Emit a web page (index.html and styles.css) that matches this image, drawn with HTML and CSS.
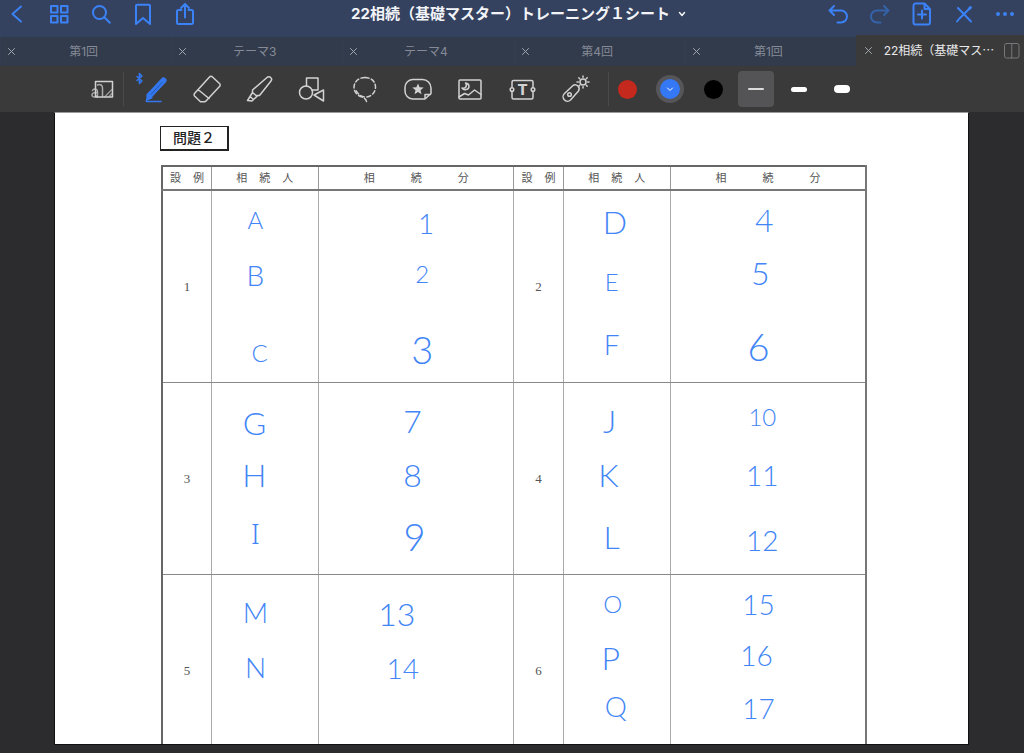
FILE: index.html
```html
<!DOCTYPE html>
<html lang="ja">
<head>
<meta charset="utf-8">
<meta name="viewport" content="width=device-width, initial-scale=1">
<title>22相続（基礎マスター）トレーニング１シート</title>
<link rel="stylesheet" href="styles.css">
</head>
<body>
<div class="app">
  <header class="topbar">
    <nav class="topbar-group">
      <button class="nav-btn nav-btn-back" aria-label="戻る"><svg width="24" height="24" viewBox="0 0 24 24"><path d="M16 4.500 7.500 12l8.500 7.500"/></svg></button>
      <button class="nav-btn" aria-label="サムネイル"><svg width="24" height="24" viewBox="0 0 24 24"><rect x="4" y="4" width="6.500" height="6.500"/><rect x="14" y="4" width="6.500" height="6.500"/><rect x="4" y="14" width="6.500" height="6.500"/><rect x="14" y="14" width="6.500" height="6.500"/></svg></button>
      <button class="nav-btn" aria-label="検索"><svg width="24" height="24" viewBox="0 0 24 24"><circle cx="10.500" cy="10.500" r="6.500"/><path d="m15.300 15.300 5.500 5.500"/></svg></button>
      <button class="nav-btn" aria-label="ブックマーク"><svg width="24" height="24" viewBox="0 0 24 24"><path d="M6 2.800h12a1 1 0 0 1 1 1V22l-7-6-7 6V3.800a1 1 0 0 1 1-1z"/></svg></button>
      <button class="nav-btn" aria-label="共有"><svg width="24" height="24" viewBox="0 0 24 24"><path d="M8.500 8H5.500A1.500 1.500 0 0 0 4 9.500v11A1.500 1.500 0 0 0 5.500 22h13a1.500 1.500 0 0 0 1.500-1.500v-11A1.500 1.500 0 0 0 18.500 8h-3M12 15.500V2.500M8 6l4-4 4 4"/></svg></button>
    </nav>
    <button class="doc-title"><span>22相続（基礎マスター）トレーニング１シート</span><svg width="8" height="8" viewBox="0 0 8 8"><path d="m1.500 2.500 2.500 3 2.500-3"/></svg></button>
    <nav class="topbar-group">
      <button class="nav-btn" aria-label="元に戻す"><svg width="24" height="24" viewBox="0 0 24 24"><path d="M8 4 3.500 8.500 8 13M3.500 8.500H15a5.500 5.500 0 0 1 0 12h-3.500"/></svg></button>
      <button class="nav-btn nav-btn-dim" aria-label="やり直す"><svg width="24" height="24" viewBox="0 0 24 24"><path d="M16 4l4.500 4.500L16 13M20.500 8.500H9a5.500 5.500 0 0 0 0 12h3.500"/></svg></button>
      <button class="nav-btn" aria-label="ページを追加"><svg width="24" height="24" viewBox="0 0 24 24"><path d="M5.500 1.500h9L20 7v13.500a2 2 0 0 1-2 2H5.500a2 2 0 0 1-2-2v-17a2 2 0 0 1 2-2zM14.500 1.500V7H20M12 8.500v8M8 12.500h8"/></svg></button>
      <button class="nav-btn" aria-label="編集を終了"><svg width="24" height="24" viewBox="0 0 24 24"><path d="m6 6 13 13.500M5 19.500l2-2.500L17 7"/><path d="m17.500 6.500 1-1" stroke-width="3"/></svg></button>
      <button class="nav-btn nav-btn-more" aria-label="その他"><svg width="24" height="24" viewBox="0 0 24 24"><circle class="fill" cx="5" cy="12" r="2"/><circle class="fill" cx="12" cy="12" r="2"/><circle class="fill" cx="19" cy="12" r="2"/></svg></button>
    </nav>
  </header>

  <nav class="tabs">
    <div class="tab"><button class="tab-close" aria-label="閉じる"><svg width="9" height="9" viewBox="0 0 9 9"><path d="m1.500 1.500 6 6m0-6-6 6"/></svg></button><button class="tab-label">第1回</button></div>
    <div class="tab"><button class="tab-close" aria-label="閉じる"><svg width="9" height="9" viewBox="0 0 9 9"><path d="m1.500 1.500 6 6m0-6-6 6"/></svg></button><button class="tab-label">テーマ3</button></div>
    <div class="tab"><button class="tab-close" aria-label="閉じる"><svg width="9" height="9" viewBox="0 0 9 9"><path d="m1.500 1.500 6 6m0-6-6 6"/></svg></button><button class="tab-label">テーマ4</button></div>
    <div class="tab"><button class="tab-close" aria-label="閉じる"><svg width="9" height="9" viewBox="0 0 9 9"><path d="m1.500 1.500 6 6m0-6-6 6"/></svg></button><button class="tab-label">第4回</button></div>
    <div class="tab"><button class="tab-close" aria-label="閉じる"><svg width="9" height="9" viewBox="0 0 9 9"><path d="m1.500 1.500 6 6m0-6-6 6"/></svg></button><button class="tab-label">第1回</button></div>
    <div class="tab tab-active"><button class="tab-close" aria-label="閉じる"><svg width="9" height="9" viewBox="0 0 9 9"><path d="m1.500 1.500 6 6m0-6-6 6"/></svg></button><button class="tab-label">22相続（基礎マス⋯</button><button class="tab-split" aria-label="分割表示"><svg width="18" height="18" viewBox="0 0 18 18"><rect x="1.500" y="1.500" width="14.500" height="14.500" rx="2"/><path d="M8.750 1.500V16"/></svg></button></div>
  </nav>

  <div class="toolbar">
    <button class="tool tool-zoom" aria-label="拡大ウインドウ"><svg width="32" height="32" viewBox="0 0 32 32"><rect x="9.500" y="8.500" width="17" height="15.500"/><path d="M6.500 17.500c1-2 5-2 5 1V24M11.500 19.500c-3-.2-5.500.3-5.500 2.500 0 2.700 4.500 2.500 5.500 0M11.500 12c3-1 5 0 5 3v8.500" opacity=".75"/><path d="M26 16.500 19 23.500M26 20.500 23 23.500" opacity=".6"/></svg></button>
    <span class="divider"></span>
    <div class="tools">
      <button class="tool tool-pen" aria-label="ペン"><svg width="38" height="36" viewBox="0 0 38 36"><path class="bt" d="m2 5.500 5 4.500-2.600 2.500v-10L7 5 2 9.500"/><path class="body" d="M14.500 24.500 28.500 9.500"/><path class="fill" d="M10.500 30.500 12.500 22l5.500 5z"/><path d="M11.500 30.500H26"/><path class="shine" d="m16 23.500 11-12"/></svg></button>
      <button class="tool" aria-label="消しゴム"><svg width="32" height="32" viewBox="0 0 32 32"><path d="M3.500 20.500 18.500 4a2 2 0 0 1 3 0l7 6.500a2 2 0 0 1 0 3L15 28a2 2 0 0 1-1.500.700H9.500L3.500 23a2 2 0 0 1 0-2.500zM7 16.500l11 9"/></svg></button>
      <button class="tool" aria-label="蛍光ペン"><svg width="32" height="32" viewBox="0 0 32 32"><path d="M8.500 17 23 4.500a2.500 2.500 0 0 1 3.700 0 2.600 2.600 0 0 1 .3 3.500L15.500 22.500h-3.500l-3.500-3zM8.500 19.500 6 23.500l3.500 3 4.500-4M6 23.500 3.500 27.500l4.500.500 1.500-1.500"/></svg></button>
      <button class="tool" aria-label="図形"><svg width="32" height="32" viewBox="0 0 32 32"><path d="M10.500 13V5H22v12h-6"/><circle cx="10" cy="19.500" r="6.500"/><path d="m18 22 9.500-5v11z"/></svg></button>
      <button class="tool" aria-label="なげなわ"><svg width="32" height="32" viewBox="0 0 32 32"><path stroke-dasharray="4 2.500" d="M16 4.500c6 0 10.500 4 10.500 9.500S22 24 17 24c-5 0-8-3-10-6.500"/><path stroke-dasharray="4 2.500" d="M16 4.500C9.500 4.500 5 9 5 14.500c0 4 2.500 7 6.500 9 3 1 5.500 2 6 5"/></svg></button>
      <button class="tool" aria-label="ステッカー"><svg width="32" height="32" viewBox="0 0 32 32"><path d="M10.500 6.500h10a8.500 8.500 0 0 1 8.500 8.500v5.500l-6 5.500H10.500A8 8 0 0 1 3 18v-3.500a8 8 0 0 1 7.500-8zM23 26v-4.500h5.500"/><path class="fill" d="m16 10.500 1.600 3.800 4.100.3-3.200 2.700 1 4L16 19.100l-3.500 2.200 1-4-3.200-2.700 4.100-.3z"/></svg></button>
      <button class="tool" aria-label="画像"><svg width="32" height="32" viewBox="0 0 32 32"><rect x="5" y="7" width="22" height="19" rx="1"/><path d="M11.500 10c2.500 3-.5 6-3.500 5 2 3 7 1.500 7-1.500 0-2-1.500-3.200-3.500-3.500zM5 24l5.500-3.500 4 1.500 6-5 6.500 4.500"/></svg></button>
      <button class="tool" aria-label="テキスト"><svg width="32" height="32" viewBox="0 0 32 32"><path d="M5 14V9a1.500 1.500 0 0 1 1.500-1.500h18A1.500 1.500 0 0 1 26 9v5M5 19v5.500A1.500 1.500 0 0 0 6.500 26h18a1.500 1.500 0 0 0 1.500-1.500V19"/><circle cx="5" cy="16.500" r="1.800"/><circle cx="26" cy="16.500" r="1.800"/><text class="tool-letter" x="15.500" y="22" text-anchor="middle">T</text></svg></button>
      <button class="tool" aria-label="レーザーポインタ"><svg width="32" height="32" viewBox="0 0 32 32"><path d="m4.500 20.500 8.500-8a4 4 0 0 1 5.500 5.500L10.500 27a4.200 4.200 0 0 1-6-6.500z"/><circle cx="9.500" cy="21.500" r="1.800"/><circle cx="23" cy="9" r="3"/><path d="M23 4.300V3M23 13.700V15M18.300 9H17M27.700 9H29M19.700 5.700l-.9-.9M26.300 5.700l.9-.9M26.300 12.300l.9.900M19.700 12.300l-.9.900"/></svg></button>
    </div>
    <span class="divider divider-end"></span>
    <div class="presets">
      <button class="preset" aria-label="赤"><span class="swatch swatch-red"></span></button>
      <button class="preset" aria-label="青"><span class="swatch swatch-blue"><svg width="8" height="8" viewBox="0 0 8 8"><path d="m1.500 3 2.500 2.500L6.500 3"/></svg></span></button>
      <button class="preset" aria-label="黒"><span class="swatch swatch-black"></span></button>
      <button class="preset preset-on" aria-label="細い線"><span class="stroke stroke-thin"></span></button>
      <button class="preset" aria-label="中くらいの線"><span class="stroke stroke-mid"></span></button>
      <button class="preset" aria-label="太い線"><span class="stroke stroke-thick"></span></button>
    </div>
  </div>

  <main class="workspace">
    <article class="sheet">
      <h1 class="question">問題２</h1>
      <table class="answers">
        <colgroup><col class="c-no"><col class="c-heir"><col class="c-share"><col class="c-no"><col class="c-heir"><col class="c-share"></colgroup>
        <thead>
          <tr>
            <th><div class="spread"><span>設</span><span>例</span></div></th>
            <th><div class="spread"><span>相</span><span>続</span><span>人</span></div></th>
            <th><div class="spread spread-wide"><span>相</span><span>続</span><span>分</span></div></th>
            <th><div class="spread"><span>設</span><span>例</span></div></th>
            <th><div class="spread"><span>相</span><span>続</span><span>人</span></div></th>
            <th><div class="spread spread-wide"><span>相</span><span>続</span><span>分</span></div></th>
          </tr>
        </thead>
        <tbody>
          <tr>
            <td>1</td>
            <td><svg class="ink"><text class="s" x="41%" y="38">A</text><text class="m" x="41%" y="95">B</text><text class="s" x="45%" y="171">C</text></svg></td>
            <td><svg class="ink"><text class="m" x="55%" y="43">1</text><text class="s" x="53%" y="92">2</text><text class="xl" x="53%" y="173">3</text></svg></td>
            <td>2</td>
            <td><svg class="ink"><text class="l" x="48%" y="43">D</text><text class="s" x="45%" y="100">E</text><text class="m" x="45%" y="164">F</text></svg></td>
            <td><svg class="ink"><text class="l" x="48%" y="41">4</text><text class="l" x="46%" y="94">5</text><text class="xl" x="45%" y="170">6</text></svg></td>
          </tr>
          <tr>
            <td>3</td>
            <td><svg class="ink"><text class="l" x="40%" y="52">G</text><text class="l" x="40%" y="104">H</text><text class="m slab" x="41%" y="161">I</text></svg></td>
            <td><svg class="ink"><text class="l" x="48%" y="50">7</text><text class="l" x="48%" y="104">8</text><text class="xl" x="49%" y="168">9</text></svg></td>
            <td>4</td>
            <td><svg class="ink"><text class="l" x="43%" y="50">J</text><text class="l" x="42%" y="104">K</text><text class="l" x="45%" y="166">L</text></svg></td>
            <td><svg class="ink"><text class="s" x="47%" y="43">10</text><text class="m" x="47%" y="103">11</text><text class="m" x="47%" y="168">12</text></svg></td>
          </tr>
          <tr>
            <td>5</td>
            <td><svg class="ink"><text class="m" x="41%" y="48">M</text><text class="m" x="41%" y="103">N</text></svg></td>
            <td><svg class="ink"><text class="l" x="40%" y="51">13</text><text class="m" x="43%" y="104">14</text></svg></td>
            <td>6</td>
            <td><svg class="ink"><text class="s" x="46%" y="38">O</text><text class="l" x="44%" y="95">P</text><text class="m" x="49%" y="142">Q</text></svg></td>
            <td><svg class="ink"><text class="m" x="45%" y="40">15</text><text class="m" x="44%" y="91">16</text><text class="m" x="45%" y="144">17</text></svg></td>
          </tr>
        </tbody>
      </table>
    </article>
  </main>
</div>
</body>
</html>
```
FILE: styles.css
```css
* { box-sizing: border-box; }

body {
  margin: 0;
  background: #2c2c2e;
  font-family: "Inter", "Noto Sans CJK JP", sans-serif;
}

button {
  margin: 0;
  padding: 0;
  border: 0;
  background: none;
  color: inherit;
  font: inherit;
}

svg {
  display: block;
  fill: none;
  stroke: currentColor;
  stroke-linecap: round;
  stroke-linejoin: round;
}

.fill { fill: currentColor; stroke: none; }

.app {
  display: flex;
  flex-direction: column;
  height: 100vh;
  overflow: hidden;
}

/* Title bar */
.topbar {
  display: flex;
  height: 37px;
  padding-bottom: 9px;
  flex: none;
  background: #34415f;
}

.topbar-group { display: flex; color: #3b82f6; }

.nav-btn {
  display: flex;
  width: 42px;
  align-items: center;
  justify-content: center;
}

.nav-btn svg { stroke-width: 2; }
.nav-btn-back { width: 38px; padding-right: 4px; }
.nav-btn-more { width: 39px; }
.nav-btn-dim { color: #3563a8; }

.doc-title {
  display: flex;
  flex: 1;
  align-items: center;
  justify-content: center;
  gap: 8px;
  padding-left: 14px;
  color: #f2f4f8;
  font-size: 15px;
  font-weight: 700;
  line-height: 20px;
  white-space: nowrap;
}

.doc-title svg { stroke-width: 1.5; }

/* Document tabs */
.tabs {
  display: grid;
  grid-template-columns: repeat(5, 1fr) 168px;
  height: 29px;
  flex: none;
  background: #323b4c;
}

.tab {
  display: flex;
  align-items: center;
  padding: 0 22px 0 6px;
  border-left: 1px solid #343e52;
  color: #858a96;
  font-size: 12px;
  line-height: 16px;
}

.tab-close { flex: none; width: 11px; color: #a3a7b0; }
.tab-label { flex: 1; white-space: nowrap; }

.tab-active {
  margin-top: -2px;
  padding: 0 3px 0 7px;
  border-color: #3a3a3b;
  background: #3a3a3b;
  color: #e8e8ea;
}

.tab-split { color: #77777b; }

/* Tool strip */
.toolbar {
  display: flex;
  align-items: center;
  height: 46px;
  padding-left: 81px;
  flex: none;
  background: #3a3a3b;
  color: #d2d2d3;
}

.divider { width: 1px; height: 34px; margin-right: 4px; background: #4a4a4c; }
.divider-end { margin-right: 0; }
.tools { display: flex; width: 480px; padding-right: 6px; }
.tool { display: flex; flex: 1; align-items: center; justify-content: center; }
.tool svg { stroke-width: 1.5; }
.tool-zoom { flex: none; width: 42px; }
.tool-pen { color: #3478f0; }
.tool-pen .body { stroke-width: 6; }
.tool-pen .shine { stroke: #2558b4; stroke-width: 1; }
.tool-letter { fill: currentColor; stroke: none; font-size: 15px; font-weight: 800; }

.presets { display: flex; gap: 7px; }

.preset {
  display: flex;
  width: 36px;
  height: 36px;
  align-items: center;
  justify-content: center;
  border-radius: 4px;
}

.preset-on { background: #545457; }

.swatch { width: 19px; height: 19px; border-radius: 50%; }
.swatch-red { background: #c5281c; }
.swatch-black { background: #000; }

.swatch-blue {
  display: flex;
  width: 28px;
  height: 28px;
  align-items: center;
  justify-content: center;
  border: 4px solid #55555a;
  background: #3478f6;
  color: #fff;
}

.stroke { width: 16px; border-radius: 4px; background: #fff; }
.stroke-thin { height: 2px; background: #dcdcdc; }
.stroke-mid { height: 5px; }
.stroke-thick { height: 8px; }

/* Page */
.workspace {
  display: flex;
  flex: 1;
  min-height: 0;
  padding: 0 55px 8px 54px;
}

.sheet {
  flex: 1;
  overflow: hidden;
  padding: 13px 101px 0 106px;
  border: 1px solid #111;
  border-top-color: #999;
  background: #fff;
}

.question {
  width: 69px;
  margin: 0 0 14px -1px;
  border: 1px solid #222;
  border-width: 1px 2px 2px 1px;
  color: #222;
  font-size: 14px;
  font-weight: 500;
  line-height: 22px;
  text-align: center;
}

.answers {
  width: 100%;
  table-layout: fixed;
  border: 2px solid #666;
  border-collapse: collapse;
  color: #555;
}

.c-no { width: 7%; }
.c-heir { width: 15.200%; }
.c-share { width: 27.800%; }

.answers th {
  height: 24px;
  padding: 0;
  border-right: 1px solid #999;
  border-bottom: 2px solid #777;
  font-size: 11px;
  font-weight: 400;
  line-height: 16px;
}

.answers td {
  height: 192px;
  padding: 0;
  border-right: 1px solid #aaa;
  border-bottom: 1px solid #888;
  font-family: "Liberation Serif", serif;
  font-size: 13px;
  text-align: center;
}

.answers th:last-child,
.answers td:last-child { border-right: 2px solid #777; }

.spread { display: flex; justify-content: center; gap: 12px; }
.spread-wide { gap: 36px; }

/* Pen answers */
.ink {
  width: 100%;
  height: 191px;
  fill: #4285f6;
  stroke: none;
  font-family: "Lato", sans-serif;
  font-weight: 300;
  text-anchor: middle;
}

.ink .s { font-size: 24px; }
.ink .m { font-size: 28px; }
.ink .l { font-size: 32px; }
.ink .xl { font-size: 38px; }
.ink .slab { font-family: "Noto Sans", sans-serif; }
```
